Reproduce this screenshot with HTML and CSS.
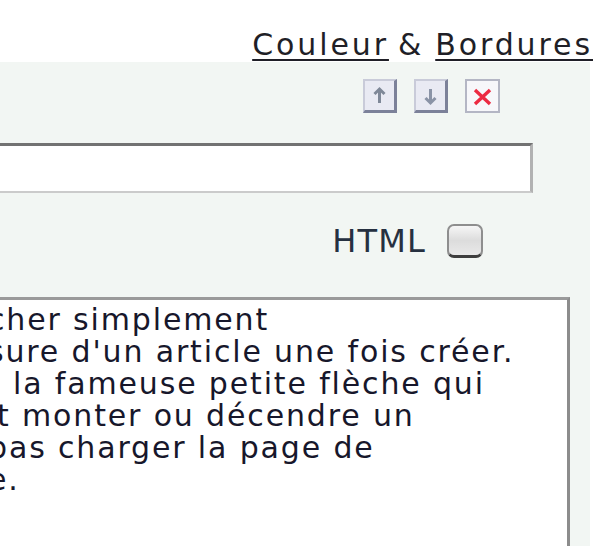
FILE: index.html
```html
<!DOCTYPE html>
<html lang="fr">
<head>
<meta charset="utf-8">
<title>Couleur &amp; Bordures</title>
<link rel="stylesheet" href="styles.css">
</head>
<body>
  <div class="header">
    <a class="link" href="#">Couleur</a><span class="amp">&amp;</span><a class="link" href="#">Bordures</a>
  </div>
  <div class="panel">
    <div class="tools">
      <span class="btn">
        <svg width="29" height="29" viewBox="0 0 29 29"><path d="M14.5 8v14M9.5 13l5-5 5 5" fill="none" stroke="#7f8898" stroke-width="3"/></svg>
      </span>
      <span class="btn">
        <svg width="29" height="29" viewBox="0 0 29 29"><path d="M14.5 8v14M9.5 17l5 5 5-5" fill="none" stroke="#8a93a6" stroke-width="3"/></svg>
      </span>
      <span class="btn btn-del">
        <svg width="29" height="29" viewBox="0 0 29 29"><path d="M7 8l15 14M22 8L7 22" fill="none" stroke="#ec2a42" stroke-width="3.4"/></svg>
      </span>
    </div>
    <div class="field"></div>
    <div class="html-row">
      <span class="html-label">HTML</span>
      <span class="checkbox"></span>
    </div>
    <div class="textarea">
      <div class="line">cher simplement</div>
      <div class="line">sure d'un article une fois créer.</div>
      <div class="line">t la fameuse petite flèche qui</div>
      <div class="line line-shift">t monter ou décendre un</div>
      <div class="line">pas charger la page de</div>
      <div class="line">e.</div>
    </div>
  </div>
</body>
</html>
```
FILE: styles.css
```css
html, body {
  margin: 0;
  padding: 0;
  background: #ffffff;
  overflow: hidden;
  width: 600px;
  height: 546px;
}

body {
  font-family: "DejaVu Sans", Verdana, sans-serif;
  color: #1b1b2e;
}

.header {
  height: 62px;
  box-sizing: border-box;
  padding-top: 30px;
  padding-right: 7px;
  display: flex;
  justify-content: flex-end;
  font-size: 30px;
  line-height: 30px;
  letter-spacing: 2.9px;
  color: #1f1f27;
}

.link {
  color: #1f1f27;
  text-decoration: underline;
  text-decoration-thickness: 2px;
  text-underline-offset: 4px;
}

.amp {
  padding: 0 11px 0 9px;
}

.panel {
  width: 590px;
  height: 484px;
  background: #f2f6f3;
  overflow: hidden;
}

.tools {
  display: flex;
  justify-content: flex-end;
  gap: 17px;
  padding-right: 90px;
  margin-top: 17px;
}

.btn {
  width: 34px;
  height: 34px;
  box-sizing: border-box;
  display: flex;
  align-items: center;
  justify-content: center;
  background: #e9eaf3;
  border-top: 2px solid #c9cbd9;
  border-left: 2px solid #c9cbd9;
  border-right: 3px solid #7c8199;
  border-bottom: 3px solid #7c8199;
}

.btn-del {
  width: 35px;
  background: #f7f7fa;
  border: 2px solid #b4b6c4;
}

.field {
  margin-top: 30px;
  margin-left: -40px;
  width: 573px;
  height: 50px;
  box-sizing: border-box;
  background: #ffffff;
  border-top: 3px solid #727272;
  border-right: 3px solid #b2b2b2;
  border-bottom: 2px solid #cbcbcb;
}

.html-row {
  margin-top: 31px;
  display: flex;
  justify-content: flex-end;
  align-items: center;
  gap: 21px;
  padding-right: 107px;
  height: 34px;
}

.html-label {
  font-size: 32px;
  letter-spacing: 1.2px;
  color: #263040;
  line-height: 34px;
}

.checkbox {
  width: 36px;
  height: 34px;
  box-sizing: border-box;
  border-radius: 7px;
  border: 2px solid #8e8e8e;
  border-bottom: 3px solid #3e3e3e;
  background: linear-gradient(#f6f6f6, #dcdcdc 50%, #e9e9e9);
}

.textarea {
  margin-top: 39px;
  margin-left: -40px;
  width: 610px;
  height: 300px;
  box-sizing: border-box;
  background: #ffffff;
  border: 3px solid #9a9a9a;
  border-right-color: #8c8c8c;
  padding: 4px 0 0 25px;
  font-size: 30px;
  line-height: 32px;
  letter-spacing: 1.85px;
  color: #17172b;
  white-space: nowrap;
}

.line-shift {
  padding-left: 9px;
}
```
